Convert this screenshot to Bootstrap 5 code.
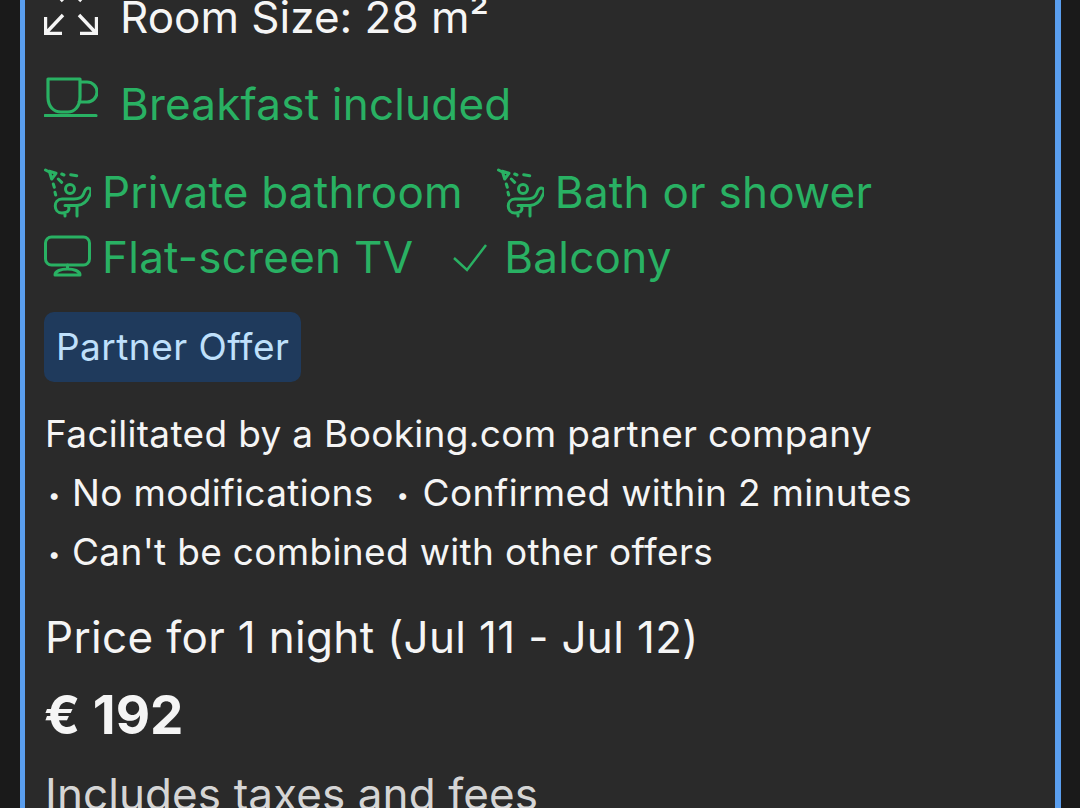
<!DOCTYPE html>
<html lang="en">
<head>
<meta charset="utf-8">
<title>Room</title>
<link href="https://cdn.jsdelivr.net/npm/bootstrap@5.3.0/dist/css/bootstrap.min.css" rel="stylesheet">
<style>
html,body{height:808px;overflow:hidden}
body{background:#1a1a1a;font-family:Inter,"Noto Sans",sans-serif;color:#f5f5f5}
.room-panel{margin:-9px 19px 0 20px;height:900px;background:#2a2a2a;border-left:5px solid #5a9eee;border-right:6px solid #5a9eee;padding:0 19px}
.line-big{font-size:44px;line-height:53px;letter-spacing:.2px}
.tx-green{color:#29b163}
.ico{flex:none;display:block}
.row-size{height:53px;gap:22px;letter-spacing:0}
.row-size .ico{margin-top:-20px}
.row-break{margin-top:34px;height:53px;gap:22px}
.row-break .ico{margin-top:-16px}
.amen-wrap{margin-top:35px;row-gap:12px;column-gap:34px;font-size:44px;line-height:53px;letter-spacing:.25px}
.amen{gap:11px}
.amen .ico-tv{margin-top:-4px}
.amen .ico-bath{margin-top:1px}
.amen-gap{gap:3px}
.partner-tag{display:inline-block;margin-top:28px;background:#1f3a5c;color:#bfe0fb;font-size:37px;letter-spacing:.45px;line-height:44px;padding:13px 12px;border-radius:10px;height:70px}
.fine{font-size:37px;letter-spacing:.33px;margin-top:22px;padding-left:1px}
.fine-line{height:59px;line-height:59px}
.bul{display:inline-block;font-size:22px;line-height:1;vertical-align:3px;width:27px;padding-left:3px}
.bul2{display:inline-block;font-size:22px;line-height:1;vertical-align:3px;width:26px;margin-left:23px}
.price-for{font-size:44px;line-height:53px;margin-top:30px;letter-spacing:.33px;padding-left:1px}
.price-val{font-size:53px;line-height:60px;font-weight:700;margin-top:21px}
.taxes{font-size:44px;line-height:53px;margin-top:23px;color:#d5d5d5;letter-spacing:.09px;padding-left:1px}
</style>
</head>
<body>
<div class="room-panel">
  <div class="d-flex align-items-center row-size line-big">
    <svg class="ico" width="54" height="54" viewBox="0 0 54 54" fill="none" stroke="#f5f5f5" stroke-width="3.400"><path d="M1.500 18V1.500H18M1.500 1.500L19 20M52.500 18V1.500H36M52.500 1.500L35 20M1.500 36v16.500H18M1.500 52.500L19 34M52.500 36v16.500H36M52.500 52.500L35 34"/></svg>
    <span>Room Size: 28 m²</span>
  </div>
  <div class="d-flex align-items-center row-break line-big tx-green">
    <svg class="ico" width="54" height="40" viewBox="0 0 54 40" fill="none" stroke="#29b163" stroke-width="3.200" stroke-linecap="round" stroke-linejoin="round"><path d="M4 2H36V20C36 30 30 35 24 35H17C10 35 4 30 4 20ZM36 5h7a10 10 0 0 1 0 20h-8M1 38.500H52"/></svg>
    <span>Breakfast included</span>
  </div>
  <div class="d-flex flex-wrap amen-wrap tx-green">
    <div class="d-flex align-items-center amen">
      <svg class="ico ico-bath" width="47" height="50" viewBox="0 0 47 50" fill="none" stroke="#29b163" stroke-width="3" stroke-linecap="round" stroke-linejoin="round"><path d="M1.500 2L5.300 4M5.300 3.300L12 5.300L7.700 11ZM17.700 6L20 7M26.700 6.700L32.700 7.700M14.300 11L17.700 14.300M9.300 16L10.300 19.300M11 24.300L11.700 27"/><circle cx="26" cy="21" r="4.500"/><path d="M39.500 26C41 23 41 20.500 44 20C47.500 20 47.500 24 46 26.500C44 32 40 37 33 37.500H21M39.500 26C38 30 35 31 30 31H18C9 31 9 45 18 45C25 45 26 41 24 37.500M33 37.500V48M21 45V48"/></svg>
      <span>Private bathroom</span>
    </div>
    <div class="d-flex align-items-center amen">
      <svg class="ico ico-bath" width="47" height="50" viewBox="0 0 47 50" fill="none" stroke="#29b163" stroke-width="3" stroke-linecap="round" stroke-linejoin="round"><path d="M1.500 2L5.300 4M5.300 3.300L12 5.300L7.700 11ZM17.700 6L20 7M26.700 6.700L32.700 7.700M14.300 11L17.700 14.300M9.300 16L10.300 19.300M11 24.300L11.700 27"/><circle cx="26" cy="21" r="4.500"/><path d="M39.500 26C41 23 41 20.500 44 20C47.500 20 47.500 24 46 26.500C44 32 40 37 33 37.500H21M39.500 26C38 30 35 31 30 31H18C9 31 9 45 18 45C25 45 26 41 24 37.500M33 37.500V48M21 45V48"/></svg>
      <span>Bath or shower</span>
    </div>
    <div class="d-flex align-items-center amen">
      <svg class="ico ico-tv" width="47" height="42" viewBox="0 0 47 42" fill="none" stroke="#29b163" stroke-width="3" stroke-linecap="round" stroke-linejoin="round"><rect x="1.500" y="2" width="44" height="28" rx="6"/><path d="M23.500 30v4M11 40c0-4 6-6 12.500-6s12.500 2 12.500 6z"/></svg>
      <span>Flat-screen TV</span>
    </div>
    <div class="d-flex align-items-center amen amen-gap">
      <svg class="ico" width="54" height="28" viewBox="0 0 54 28" fill="none" stroke="#29b163" stroke-width="2.500"><path d="M7 14L20 26L39 1"/></svg>
      <span>Balcony</span>
    </div>
  </div>
  <div class="partner-tag">Partner Offer</div>
  <div class="fine">
    <div class="fine-line">Facilitated by a Booking.com partner company</div>
    <div class="fine-line"><span class="bul">•</span>No modifications<span class="bul2">•</span>Confirmed within 2 minutes</div>
    <div class="fine-line"><span class="bul">•</span>Can't be combined with other offers</div>
  </div>
  <div class="price-for">Price for 1 night (Jul 11 - Jul 12)</div>
  <div class="price-val">€ 192</div>
  <div class="taxes">Includes taxes and fees</div>
</div>
</body>
</html>
